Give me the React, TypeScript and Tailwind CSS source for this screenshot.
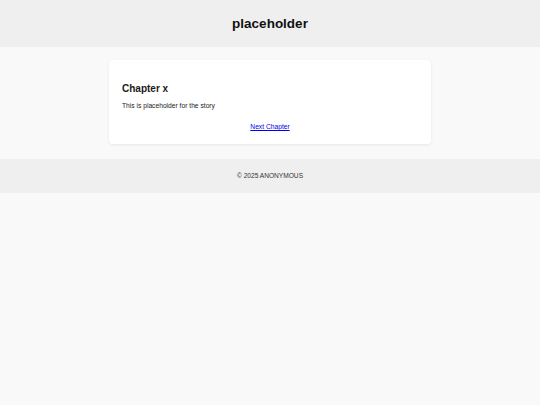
export default function App() {
  return (
    <div className="min-h-[405px] bg-[#f9f9f9] text-[#222]" style={{ fontFamily: '"Liberation Sans", Arial, sans-serif' }}>
      <header className="flex h-[47px] items-center justify-center bg-[#efefef]">
        <h1 className="text-[13.5px] font-bold leading-[16px] text-[#111]">placeholder</h1>
      </header>
      <main className="px-[109px] pt-[13px] pb-[15px]">
        <div className="rounded-[4px] bg-white px-[13px] pt-[23px] pb-[13px] shadow-[0_1px_3px_rgba(0,0,0,0.08)]">
          <h2 className="text-[10px] font-bold leading-[12px] text-[#1a1a1a]">Chapter x</h2>
          <p className="mt-[7px] text-[6.7px] leading-[8px] text-[#222]">This is placeholder for the story</p>
          <div className="mt-[13px] text-center text-[6.7px] leading-[8px]">
            <a href="#" className="text-[#0000ee] underline">Next Chapter</a>
          </div>
        </div>
      </main>
      <footer className="flex h-[34px] items-center justify-center bg-[#efefef]">
        <span className="text-[6.6px] leading-[8px] text-[#333]">© 2025 ANONYMOUS</span>
      </footer>
    </div>
  );
}
